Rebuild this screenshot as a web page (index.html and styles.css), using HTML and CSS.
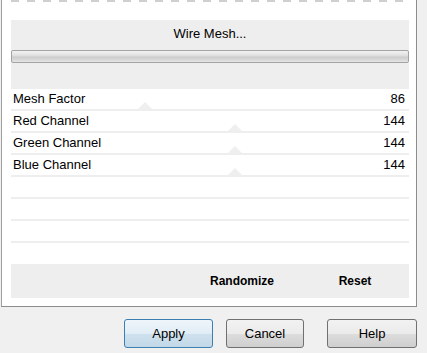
FILE: index.html
```html
<!DOCTYPE html>
<html lang="en">
<head>
    <meta charset="UTF-8">
    <title>Wire Mesh</title>
    <link rel="stylesheet" href="styles.css">
</head>
<body>
    <div class="panel">
        <div class="dashes"></div>
        <div class="header">
            <div class="title">Wire Mesh...</div>
            <div class="slider"></div>
        </div>
        <div class="rows">
            <div class="row"><span>Mesh Factor</span><span>86</span><i class="thumb thumb-mesh"></i></div>
            <div class="row"><span>Red Channel</span><span>144</span><i class="thumb thumb-chan"></i></div>
            <div class="row"><span>Green Channel</span><span>144</span><i class="thumb thumb-chan"></i></div>
            <div class="row"><span>Blue Channel</span><span>144</span><i class="thumb thumb-chan"></i></div>
            <div class="row"></div>
            <div class="row"></div>
            <div class="row"></div>
        </div>
        <div class="tools">
            <span class="tool tool-random">Randomize</span>
            <span class="tool tool-reset">Reset</span>
        </div>
    </div>
    <div class="buttons">
        <button type="button" class="btn btn-apply">Apply</button>
        <button type="button" class="btn btn-cancel">Cancel</button>
        <button type="button" class="btn btn-help">Help</button>
    </div>
</body>
</html>
```

FILE: styles.css
```css
body {
    margin: 0;
    background: #f0f0f0;
    font-family: "Liberation Sans", Arial, sans-serif;
    font-size: 13px;
    color: #000;
}
.panel {
    box-sizing: border-box;
    width: 416px;
    margin-left: 1px;
    padding: 0 7px 8px 9px;
    background: #fff;
    border-left: 1px solid #a0a0a0;
    border-right: 1px solid #8c8c8c;
    border-bottom: 1px solid #8c8c8c;
}
.dashes {
    height: 2px;
    margin-bottom: 18px;
    width: 396px;
    background: repeating-linear-gradient(to right, #cfcfcf 0 8px, transparent 8px 16px);
}
.header {
    height: 69px;
    background: #eeeeee;
}
.title {
    padding-top: 6px;
    line-height: 16px;
    margin-bottom: 8px;
    text-align: center;
}
.slider {
    box-sizing: border-box;
    height: 13px;
    border: 1px solid #a3a3a3;
    border-radius: 2px;
    background: linear-gradient(#f3f3f3, #e0e0e0 40%, #cdcdcd 55%, #d8d8d8 80%, #e6e6e6);
}
.row {
    position: relative;
    display: flex;
    justify-content: space-between;
    height: 20px;
    line-height: 20px;
    padding: 0 4px 0 2px;
    border-bottom: 2px solid #eeeeee;
}
.thumb {
    position: absolute;
    bottom: 0;
    width: 0;
    height: 0;
    border-left: 7px solid transparent;
    border-right: 7px solid transparent;
    border-bottom: 7px solid #efefef;
}
.thumb-mesh {
    left: 127px;
}
.thumb-chan {
    left: 217px;
}
.tools {
    display: flex;
    height: 34px;
    margin-top: 21px;
    padding-left: 169px;
    align-items: center;
    background: #eeeeee;
    font-size: 12px;
    font-weight: bold;
}
.tool {
    text-align: center;
}
.tool-random {
    width: 124px;
}
.tool-reset {
    width: 102px;
}
.buttons {
    display: flex;
    margin-top: 12px;
    padding-left: 124px;
}
.btn {
    height: 29px;
    padding: 0;
    font-family: "Liberation Sans", Arial, sans-serif;
    font-size: 13px;
    color: #000;
    border: 1px solid #707070;
    border-radius: 3px;
    background: linear-gradient(#f2f2f2, #ebebeb 50%, #dddddd 50%, #cfcfcf);
}
.btn-apply {
    width: 89px;
    border-color: #3c7fb1;
    background: linear-gradient(#eef5fa, #e1edf6 50%, #cfe1ee 50%, #c2d8e8);
}
.btn-cancel {
    width: 78px;
    margin-left: 13px;
}
.btn-help {
    width: 90px;
    margin-left: 23px;
}
```
